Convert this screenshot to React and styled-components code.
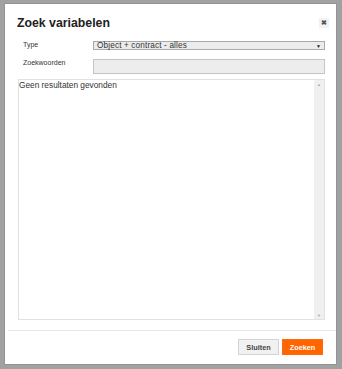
import React, { useState } from 'react'
import styled, { createGlobalStyle } from 'styled-components'

const GlobalStyle = createGlobalStyle`
  html, body {
    margin: 0;
    padding: 0;
    background: #a1a1a1;
    font-family: "Liberation Sans", Arial, sans-serif;
  }
`

const Overlay = styled.div`
  width: 342px;
  height: 369px;
  box-sizing: border-box;
  padding: 4px 6px 5px 5px;
  background: #a1a1a1;
`

const Modal = styled.div`
  height: 100%;
  background: #fff;
  box-shadow: 0 0 0 1px rgba(0, 0, 0, 0.08);
  display: flex;
  flex-direction: column;
`

const Header = styled.div`
  display: flex;
  align-items: center;
  justify-content: space-between;
  padding: 7px 7px 0 12px;
  height: 24px;
`

const Title = styled.h2`
  margin: 0;
  font-size: 12.3px;
  font-weight: bold;
  color: #222;
`

const Close = styled.button`
  width: 10px;
  height: 10px;
  border: 0;
  padding: 0;
  background: #f2f2f2;
  color: #555;
  font-size: 7px;
  font-weight: bold;
  line-height: 10px;
  cursor: pointer;
`

const Body = styled.div`
  flex: 1;
  display: flex;
  flex-direction: column;
  padding: 6px 11px 10px 13px;
`

const Row = styled.div`
  display: flex;
  align-items: flex-start;
  margin-left: 5px;
  margin-bottom: ${p => p.$gap}px;
`

const Label = styled.label`
  width: 70px;
  font-size: 7px;
  color: #333;
  padding-top: ${p => p.$offset}px;
`

const Select = styled.div`
  flex: 1;
  height: 9px;
  box-sizing: border-box;
  border: 1px solid #a9a9a9;
  background: #ececec;
  display: flex;
  align-items: center;
  justify-content: space-between;
  padding: 0 3px 0 3px;
  font-size: 8.2px;
  letter-spacing: 0.15px;
  color: #333;
`

const Arrow = styled.span`
  font-size: 5px;
  color: #222;
`

const Input = styled.input`
  flex: 1;
  height: 15px;
  box-sizing: border-box;
  border: 1px solid #c4c4c4;
  background: #ededed;
  padding: 0 3px;
  font-size: 8px;
  outline: 0;
`

const Results = styled.div`
  flex: 1;
  display: flex;
  border: 1px solid #e2e2e2;
`

const ResultText = styled.div`
  flex: 1;
  font-size: 8.3px;
  color: #333;
  line-height: 10px;
`

const Scrollbar = styled.div`
  width: 10px;
  background: #f0f0f0;
  display: flex;
  flex-direction: column;
  justify-content: space-between;
  align-items: center;
  padding: 2px 0 1px;
  color: #a8a8a8;
  font-size: 4px;
`

const Footer = styled.div`
  margin: 0 0 0 3px;
  border-top: 1px solid #e6e6e6;
  display: flex;
  justify-content: flex-end;
  gap: 3px;
  padding: 8px 13px 9px 0;
`

const Button = styled.button`
  height: 16px;
  border: 1px solid ${p => (p.$primary ? '#ff6a10' : '#d4d4d4')};
  background: ${p => (p.$primary ? '#ff6600' : '#f1f1f1')};
  color: ${p => (p.$primary ? '#fff' : '#444')};
  font-family: "Liberation Sans", Arial, sans-serif;
  font-weight: bold;
  font-size: 7.3px;
  padding: 0;
  width: ${p => p.$w}px;
  cursor: pointer;
`

export default function App() {
  const [query, setQuery] = useState('')
  return (
    <>
      <GlobalStyle />
      <Overlay>
        <Modal>
          <Header>
            <Title>Zoek variabelen</Title>
            <Close>✖</Close>
          </Header>
          <Body>
            <Row $gap={9}>
              <Label $offset={0}>Type</Label>
              <Select>
                <span>Object + contract - alles</span>
                <Arrow>▼</Arrow>
              </Select>
            </Row>
            <Row $gap={5}>
              <Label $offset={0}>Zoekwoorden</Label>
              <Input value={query} onChange={e => setQuery(e.target.value)} />
            </Row>
            <Results>
              <ResultText>Geen resultaten gevonden</ResultText>
              <Scrollbar>
                <span>▲</span>
                <span>▼</span>
              </Scrollbar>
            </Results>
          </Body>
          <Footer>
            <Button $w={41}>Sluiten</Button>
            <Button $primary $w={41}>Zoeken</Button>
          </Footer>
        </Modal>
      </Overlay>
    </>
  )
}
